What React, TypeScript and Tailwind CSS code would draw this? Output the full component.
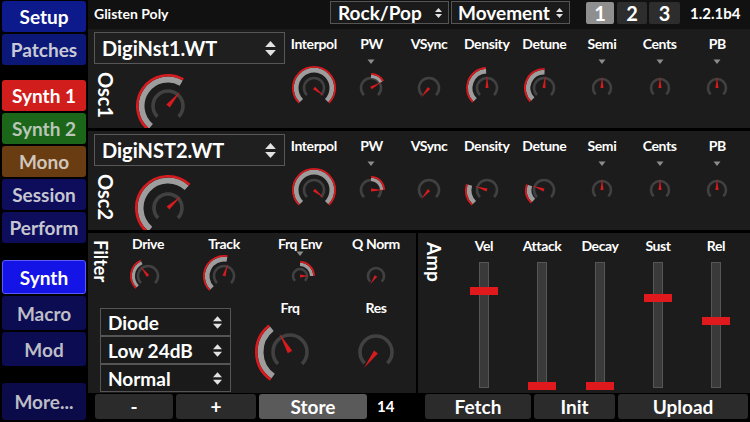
import React from "react";

const RED = "#d81b1f";

function pt(cx: number, cy: number, r: number, a: number): [number, number] {
  const rad = (a * Math.PI) / 180;
  return [cx + r * Math.sin(rad), cy - r * Math.cos(rad)];
}

function arc(cx: number, cy: number, r: number, a0: number, a1: number) {
  const [x0, y0] = pt(cx, cy, r, a0);
  const [x1, y1] = pt(cx, cy, r, a1);
  const large = a1 - a0 > 180 ? 1 : 0;
  return `M${x0.toFixed(2)} ${y0.toFixed(2)} A${r} ${r} 0 ${large} 1 ${x1.toFixed(2)} ${y1.toFixed(2)}`;
}

type KnobProps = {
  w?: number;
  h?: number;
  cy?: number;
  r: number;
  R?: number;
  from?: number;
  to?: number;
  ptr: number;
  tri?: number;
};

function Knob({ w = 56, h = 60, cy = 36, r, R = 0, from = -135, to = -135, ptr, tri }: KnobProps) {
  const cx = w / 2;
  const band = R > 28 ? 8.5 : R > 18 ? 6.5 : 5;
  const red = R > 28 ? 2.6 : 1.8;
  const grey = band - red;
  const track = r > 12 ? 3.6 : 2.6;
  const [tx, ty] = pt(cx, cy, r * 1.25, ptr);
  const bw = Math.max(1.5, r * 0.15);
  const [lx, ly] = pt(cx, cy, bw, ptr - 90);
  const [rx, ry] = pt(cx, cy, bw, ptr + 90);
  return (
    <svg width={w} height={h} className="block">
      <path d={arc(cx, cy, r, -135, 135)} fill="none" stroke="#414141" strokeWidth={track} />
      {R > 0 && to > from && (
        <>
          <path d={arc(cx, cy, R - red - grey / 2, from, to)} fill="none" stroke="#9d9d9d" strokeWidth={grey} />
          <path d={arc(cx, cy, R - red / 2, from, to)} fill="none" stroke={RED} strokeWidth={red} />
        </>
      )}
      <polygon points={`${lx},${ly} ${tx},${ty} ${rx},${ry}`} fill={RED} />
      {tri !== undefined && (
        <polygon
          points={`${cx - 3.5},${cy - tri - 2.5} ${cx + 3.5},${cy - tri - 2.5} ${cx},${cy - tri + 2}`}
          fill="#8c8c8c"
        />
      )}
    </svg>
  );
}

function UpDown({ w, h }: { w: number; h: number }) {
  return (
    <svg width={w} height={h} viewBox="0 0 10 14" className="block shrink-0">
      <polygon points="5,0 10,5.6 0,5.6" fill="#e2e2e2" />
      <polygon points="0,8.4 10,8.4 5,14" fill="#e2e2e2" />
    </svg>
  );
}

type KnobCfg = KnobProps & { label: string };

const osc1: KnobCfg[] = [
  { label: "Interpol", r: 10, R: 22, from: -135, to: 135, ptr: 128 },
  { label: "PW", r: 10, R: 15, from: 0, to: 60, ptr: 60, tri: 26 },
  { label: "VSync", r: 10, ptr: -140 },
  { label: "Density", r: 10, R: 21, from: -135, to: -3, ptr: 0 },
  { label: "Detune", r: 10, R: 20, from: -135, to: 2, ptr: 6 },
  { label: "Semi", r: 9, ptr: 0, tri: 26 },
  { label: "Cents", r: 9, ptr: 0, tri: 26 },
  { label: "PB", r: 9, ptr: 0, tri: 26 },
];

const osc2: KnobCfg[] = [
  { label: "Interpol", r: 10, R: 22, from: -135, to: 135, ptr: 128 },
  { label: "PW", r: 10, R: 14, from: 0, to: 90, ptr: 90, tri: 26 },
  { label: "VSync", r: 10, ptr: -140 },
  { label: "Density", r: 10, R: 22, from: -135, to: -74, ptr: -72 },
  { label: "Detune", r: 10, R: 19, from: -135, to: -72, ptr: -70 },
  { label: "Semi", r: 9, ptr: 0, tri: 26 },
  { label: "Cents", r: 9, ptr: 0, tri: 26 },
  { label: "PB", r: 9, ptr: 0, tri: 26 },
];

const filterTop: KnobCfg[] = [
  { label: "Drive", r: 10, R: 18, from: -135, to: -25, ptr: -38 },
  { label: "Track", r: 10, R: 21, from: -135, to: 10, ptr: 18 },
  { label: "Frq Env", r: 7, R: 15, from: 0, to: 90, ptr: 90, tri: 22 },
  { label: "Q Norm", r: 8, ptr: -145 },
];

const sliders = [
  { label: "Vel", top: 24 },
  { label: "Attack", top: 119 },
  { label: "Decay", top: 119 },
  { label: "Sust", top: 31 },
  { label: "Rel", top: 54 },
];

function SideButton({ label, cls }: { label: string; cls: string }) {
  return (
    <div className={`ml-[2px] w-[84px] rounded-[3px] flex items-center justify-center text-[19px] leading-none ${cls}`}>
      {label}
    </div>
  );
}

function Sidebar() {
  return (
    <div className="w-[88px] shrink-0 flex flex-col pt-[1px]">
      <SideButton label="Setup" cls="h-[31px] bg-[#0c1a8c] text-white" />
      <SideButton label="Patches" cls="h-[31px] mt-[2px] bg-[#0b1878] text-[#c9c9d6]" />
      <SideButton label="Synth 1" cls="h-[31px] mt-[15px] bg-[#d21d1d] text-white" />
      <SideButton label="Synth 2" cls="h-[31px] mt-[2px] bg-[#1c661a] text-[#b9c6b8]" />
      <SideButton label="Mono" cls="h-[31px] mt-[2px] bg-[#6a3c12] text-[#cfc6bc]" />
      <SideButton label="Session" cls="h-[31px] mt-[2px] bg-[#0d0d5c] text-[#c6c6d0]" />
      <SideButton label="Perform" cls="h-[31px] mt-[2px] bg-[#0d0d5c] text-[#c6c6d0]" />
      <SideButton label="Synth" cls="h-[34px] mt-[17px] bg-[#1414e6] border border-[#5a5aff] text-white" />
      <SideButton label="Macro" cls="h-[34px] mt-[2px] bg-[#0c0c52] text-[#bdbdc6]" />
      <SideButton label="Mod" cls="h-[34px] mt-[2px] bg-[#0c0c52] text-[#bdbdc6]" />
      <SideButton label="More..." cls="h-[37px] mt-[17px] bg-[#0b0b4a] text-[#bdbdc6]" />
    </div>
  );
}

function TopBar() {
  return (
    <div className="h-[29px] bg-[#111] flex items-start">
      <div className="w-[242px] pl-[6px] pt-[6px] text-[14px] leading-[16px]">Glisten Poly</div>
      <div className="mt-[1px] w-[119px] h-[23px] border border-[#555] bg-[#1a1a1a] flex items-center justify-between pl-[7px] pr-[6px]">
        <span className="text-[19px] leading-none">Rock/Pop</span>
        <UpDown w={7} h={12} />
      </div>
      <div className="mt-[1px] ml-[2px] w-[119px] h-[23px] border border-[#555] bg-[#1a1a1a] flex items-center justify-between pl-[6px] pr-[6px]">
        <span className="text-[19px] leading-none">Movement</span>
        <UpDown w={7} h={12} />
      </div>
      <div className="mt-[2px] ml-[16px] flex">
        <div className="w-[28px] h-[22px] rounded-[2px] bg-[#8f8f8f] flex items-center justify-center text-[20px] leading-none">1</div>
        <div className="ml-[3px] w-[30px] h-[22px] rounded-[2px] bg-[#2d2d2d] flex items-center justify-center text-[20px] leading-none">2</div>
        <div className="ml-[2px] w-[31px] h-[22px] rounded-[2px] bg-[#2d2d2d] flex items-center justify-center text-[20px] leading-none">3</div>
      </div>
      <div className="ml-[10px] pt-[5px] text-[15px] leading-[17px]">1.2.1b4</div>
    </div>
  );
}

function OscPanel({ name, file, big, knobs }: { name: string; file: string; big: KnobProps; knobs: KnobCfg[] }) {
  return (
    <div className="h-[99px] bg-[#1c1c1c] flex">
      <div className="w-[197px] shrink-0 flex flex-col">
        <div className="mt-[3px] ml-[6px] w-[191px] h-[32px] border border-[#575757] bg-[#1f1f1f] flex items-center justify-between pl-[7px] pr-[8px]">
          <span className="text-[20px] leading-none">{file}</span>
          <UpDown w={11} h={15} />
        </div>
        <div className="flex pl-[8px]">
          <div className="w-[20px] mt-[8px] [writing-mode:vertical-rl] text-[20px] leading-[20px]">{name}</div>
          <div className="ml-[12px]">
            <Knob w={80} h={64} cy={42} {...big} />
          </div>
        </div>
      </div>
      <div className="flex-1 grid grid-cols-8 pr-[4px]">
        {knobs.map((k) => (
          <div key={k.label} className="flex flex-col items-center pt-[7px]">
            <span className="text-[14px] leading-[16px] tracking-[-0.4px]">{k.label}</span>
            <Knob {...k} />
          </div>
        ))}
      </div>
    </div>
  );
}

function FilterPanel() {
  return (
    <div className="w-[328px] shrink-0 bg-[#1c1c1c] flex flex-col">
      <div className="flex h-[68px]">
        <div className="ml-[6px] w-[16px] mt-[7px] [writing-mode:vertical-rl] text-[18px] leading-[18px]">Filter</div>
        {filterTop.map((k) => (
          <div key={k.label} className="w-[76px] flex flex-col items-center pt-[4px]">
            <span className="text-[14px] leading-[14px] tracking-[-0.4px]">{k.label}</span>
            <Knob w={60} h={50} cy={25} {...k} />
          </div>
        ))}
      </div>
      <div className="flex flex-1">
        <div className="ml-[12px] mt-[7px] w-[131px] flex flex-col">
          {["Diode", "Low 24dB", "Normal"].map((t) => (
            <div
              key={t}
              className="h-[28px] border border-[#555] bg-[#1a1a1a] flex items-center justify-between pl-[7px] pr-[8px]"
            >
              <span className="text-[19px] leading-none">{t}</span>
              <UpDown w={9} h={13} />
            </div>
          ))}
        </div>
        <div className="ml-[4px] w-[110px] flex flex-col items-center">
          <span className="text-[14px] leading-[14px] tracking-[-0.4px]">Frq</span>
          <Knob w={90} h={78} cy={37} r={17} R={35} from={-145} to={-38} ptr={-30} />
        </div>
        <div className="w-[62px] flex flex-col items-center">
          <span className="text-[14px] leading-[14px] tracking-[-0.4px]">Res</span>
          <Knob w={60} h={78} cy={37} r={16} ptr={-143} />
        </div>
      </div>
    </div>
  );
}

function AmpPanel() {
  return (
    <div className="flex-1 bg-[#1c1c1c] flex pl-[7px]">
      <div className="w-[30px] pt-[9px]">
        <div className="[writing-mode:vertical-rl] text-[19px] leading-[19px]">Amp</div>
      </div>
      {sliders.map((s) => (
        <div key={s.label} className="w-[58px] flex flex-col items-center pt-[6px]">
          <span className="text-[14px] leading-[14px] tracking-[-0.4px]">{s.label}</span>
          <div className="relative mt-[9px] w-[10px] h-[126px] bg-[#3a3a3a] border border-[#565656]">
            <div className="absolute left-[-10px] w-[28px] h-[8px] bg-[#e0191c]" style={{ top: s.top }} />
          </div>
        </div>
      ))}
    </div>
  );
}

function BottomBar() {
  const btn = "h-[25px] rounded-[3px] flex items-center justify-center text-[19px] leading-none";
  return (
    <div className="h-[29px] flex items-start pt-[1px]">
      <div className={`${btn} ml-[7px] w-[78px] bg-[#2b2b2b]`}>-</div>
      <div className={`${btn} ml-[3px] w-[80px] bg-[#2b2b2b]`}>+</div>
      <div className={`${btn} ml-[3px] w-[108px] bg-[#5a5a5a]`}>Store</div>
      <div className="w-[57px] h-[25px] pl-[10px] flex items-center text-[15px] leading-none">14</div>
      <div className={`${btn} ml-[1px] w-[106px] bg-[#2b2b2b]`}>Fetch</div>
      <div className={`${btn} ml-[3px] w-[81px] bg-[#2b2b2b]`}>Init</div>
      <div className={`${btn} ml-[3px] w-[130px] bg-[#2b2b2b]`}>Upload</div>
    </div>
  );
}

export default function App() {
  return (
    <div className="w-[750px] h-[422px] bg-black flex overflow-hidden font-[Lato,sans-serif] font-bold text-white">
      <Sidebar />
      <div className="flex-1 flex flex-col">
        <TopBar />
        <OscPanel name="Osc1" file="DigiNst1.WT" big={{ r: 15, R: 32, from: -140, to: 30, ptr: 40 }} knobs={osc1} />
        <div className="h-[3px]" />
        <OscPanel name="Osc2" file="DigiNST2.WT" big={{ r: 14, R: 33, from: -140, to: 43, ptr: 48 }} knobs={osc2} />
        <div className="h-[3px]" />
        <div className="h-[160px] flex gap-[2px]">
          <FilterPanel />
          <AmpPanel />
        </div>
        <BottomBar />
      </div>
    </div>
  );
}
